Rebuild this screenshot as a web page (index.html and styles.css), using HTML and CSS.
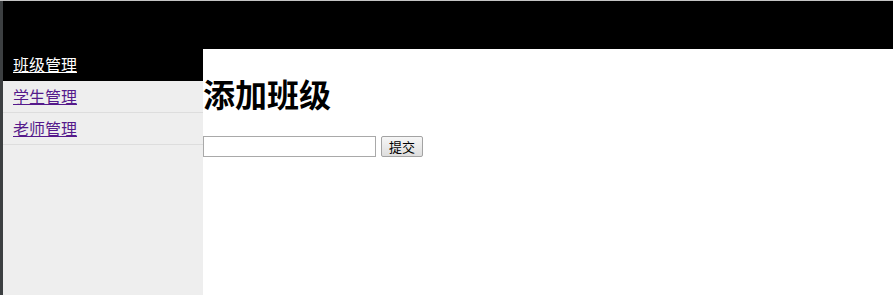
FILE: index.html
```html
<!DOCTYPE html>
<html lang="zh">
<head>
<meta charset="utf-8">
<title>班级管理</title>
<link rel="stylesheet" href="styles.css">
</head>
<body>
<div class="frame">
  <div class="page">
    <div class="header"></div>
    <div class="menu">
      <a class="item active" href="#">班级管理</a>
      <a class="item" href="#">学生管理</a>
      <a class="item" href="#">老师管理</a>
    </div>
    <div class="content">
      <h1 class="title">添加班级</h1>
      <form class="form">
        <input class="field" type="text">
        <button class="submit" type="button">提交</button>
      </form>
    </div>
  </div>
</div>
</body>
</html>
```
FILE: styles.css
```css
html, body {
  margin: 0;
  padding: 0;
  height: 100%;
}
body {
  background: #3c3f41;
  font-family: "Noto Sans CJK SC", "Microsoft YaHei", sans-serif;
}
.frame {
  height: 100%;
  box-sizing: border-box;
  border-top: 1px solid #c4c4c4;
  padding-left: 3px;
}
.page {
  height: 100%;
  display: grid;
  grid-template-columns: 200px 1fr;
  grid-template-rows: 48px 1fr;
  background: #fff;
}
.header {
  grid-column: 1 / 3;
  background: #000;
}
.menu {
  background: #eeeeee;
  display: flex;
  flex-direction: column;
}
.item {
  display: block;
  height: 31px;
  line-height: 31px;
  padding-left: 10px;
  border-bottom: 1px solid #dddddd;
  font-size: 16px;
  color: #551a8b;
  text-decoration: underline;
}
.item.active {
  background: #000;
  color: #fff;
  border-bottom-color: #000;
}
.content {
  background: #fff;
}
.title {
  margin: 21px 0 20px 0;
  font-size: 32px;
  font-weight: bold;
  line-height: 46px;
  color: #000;
}
.form {
  display: flex;
  align-items: flex-start;
  gap: 5px;
  margin: 0;
}
.field {
  box-sizing: border-box;
  width: 173px;
  height: 21px;
  margin: 0;
  padding: 1px 2px;
  border: 1px solid #a9a9a9;
  background: #fff;
}
.submit {
  box-sizing: border-box;
  width: 42px;
  height: 21px;
  margin: 0;
  padding: 0;
  font-family: "Noto Sans CJK SC", sans-serif;
  font-size: 13px;
  line-height: 17px;
  color: #000;
  border: 1px solid #a3a3a3;
  border-radius: 2px;
  background: linear-gradient(#f6f6f6, #dedede);
}
```
